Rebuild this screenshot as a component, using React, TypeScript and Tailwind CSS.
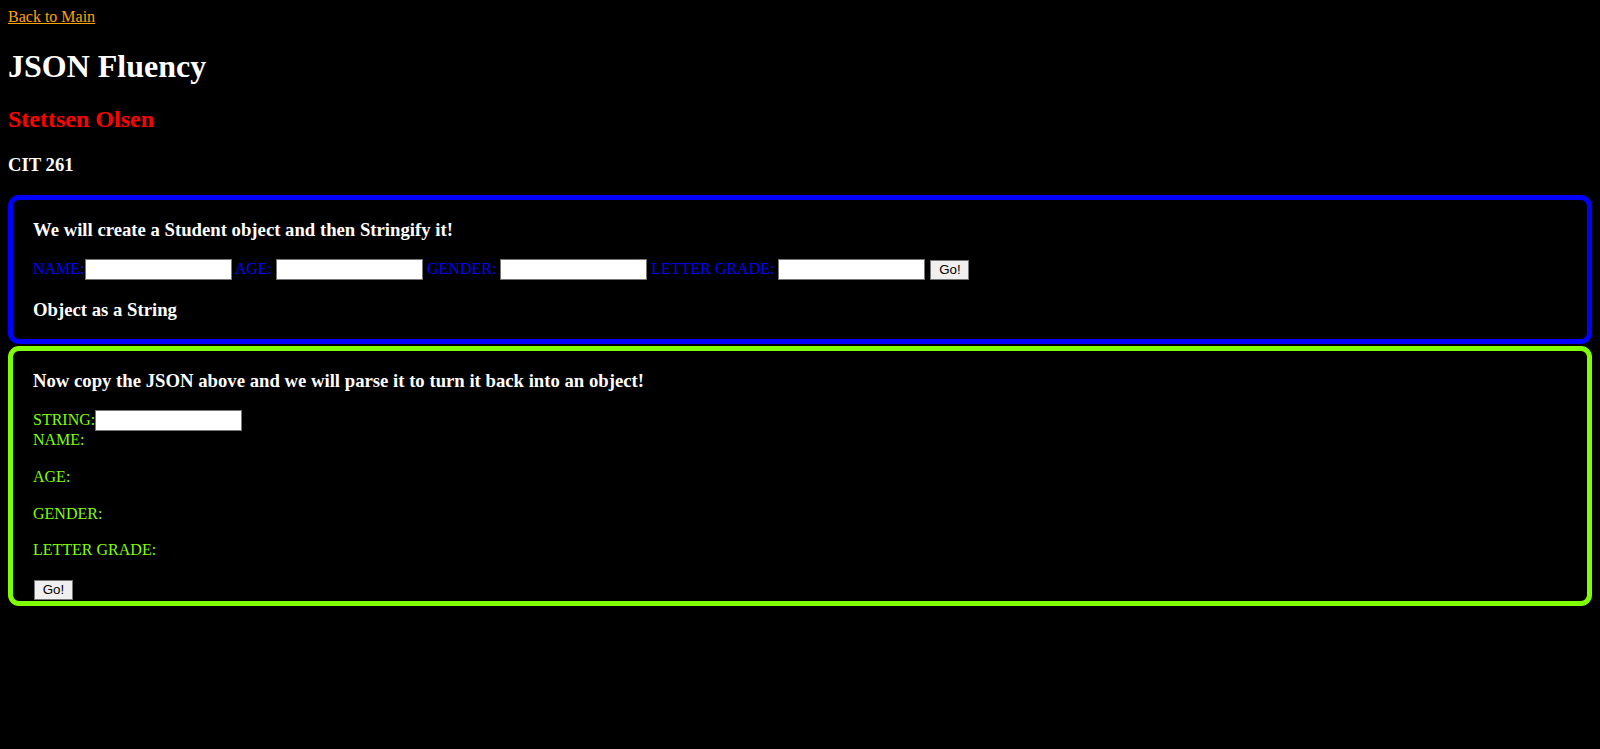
import React from "react";

const sans = { fontFamily: "Arial, 'Liberation Sans', sans-serif" };

const Input = () => (
  <input
    type="text"
    className="inline-block w-[147px] border border-[#767676] bg-white px-[3px] py-[2px] text-[13.33px] leading-[normal] align-baseline text-black outline-none"
    style={sans}
  />
);

export default function App() {
  return (
    <div
      className="min-h-[749px] bg-black p-[8px] text-[16px] leading-[18.4px] text-white"
      style={{ fontFamily: "'Liberation Serif', 'Times New Roman', serif" }}
    >
      <a href="#" className="text-[#ffa500] underline">
        Back to Main
      </a>
      <h1 className="mt-[21.44px] mb-[21.44px] text-[32px] font-bold leading-[36.8px]">JSON Fluency</h1>
      <h2 className="mt-[19.92px] mb-[19.92px] text-[24px] font-bold leading-[27.6px] text-[#ff0000]">
        Stettsen Olsen
      </h2>
      <h3 className="mt-[19.4px] mb-[20.4px] text-[18.72px] font-bold leading-[21.5px]">CIT 261</h3>

      <section className="rounded-[11px] border-[5px] border-[#0000ff] px-[20px]">
        <h3 className="mt-[18.72px] mb-[18.72px] text-[18.72px] font-bold leading-[21.5px]">
          We will create a Student object and then Stringify it!
        </h3>
        <div className="text-[#0000ff]">
          <label>NAME:</label>
          <Input /> <label>AGE: </label>
          <Input /> <label>GENDER: </label>
          <Input /> <label>LETTER GRADE: </label>
          <Input />{" "}
          <button
            type="button"
            className="inline-block align-top mt-[1px] ml-[1px] w-[39px] h-[20px] border border-[#767676] bg-[#efefef] text-[13.33px] leading-[18px] text-black"
            style={sans}
          >
            Go!
          </button>
        </div>
        <h3 className="mt-[18.72px] mb-[18.72px] text-[18.72px] font-bold leading-[21.5px]">Object as a String</h3>
      </section>

      <section className="mt-[1.8px] rounded-[11px] border-[5px] border-[#7fff00] px-[20px] pb-[1px]">
        <h3 className="mt-[18.72px] mb-[18.72px] text-[18.72px] font-bold leading-[21.5px]">
          Now copy the JSON above and we will parse it to turn it back into an object!
        </h3>
        <div className="text-[#7fff00]">
          <div>
            <label>STRING:</label>
            <Input />
          </div>
          <div>NAME: </div>
          <div className="mt-[18.4px]">AGE: </div>
          <div className="mt-[18.4px]">GENDER: </div>
          <div className="mt-[18.4px]">LETTER GRADE: </div>
          <button
            type="button"
            className="block mt-[19.9px] ml-[1px] w-[39px] h-[20px] border border-[#767676] bg-[#efefef] text-[13.33px] leading-[18px] text-black"
            style={sans}
          >
            Go!
          </button>
        </div>
      </section>
    </div>
  );
}
